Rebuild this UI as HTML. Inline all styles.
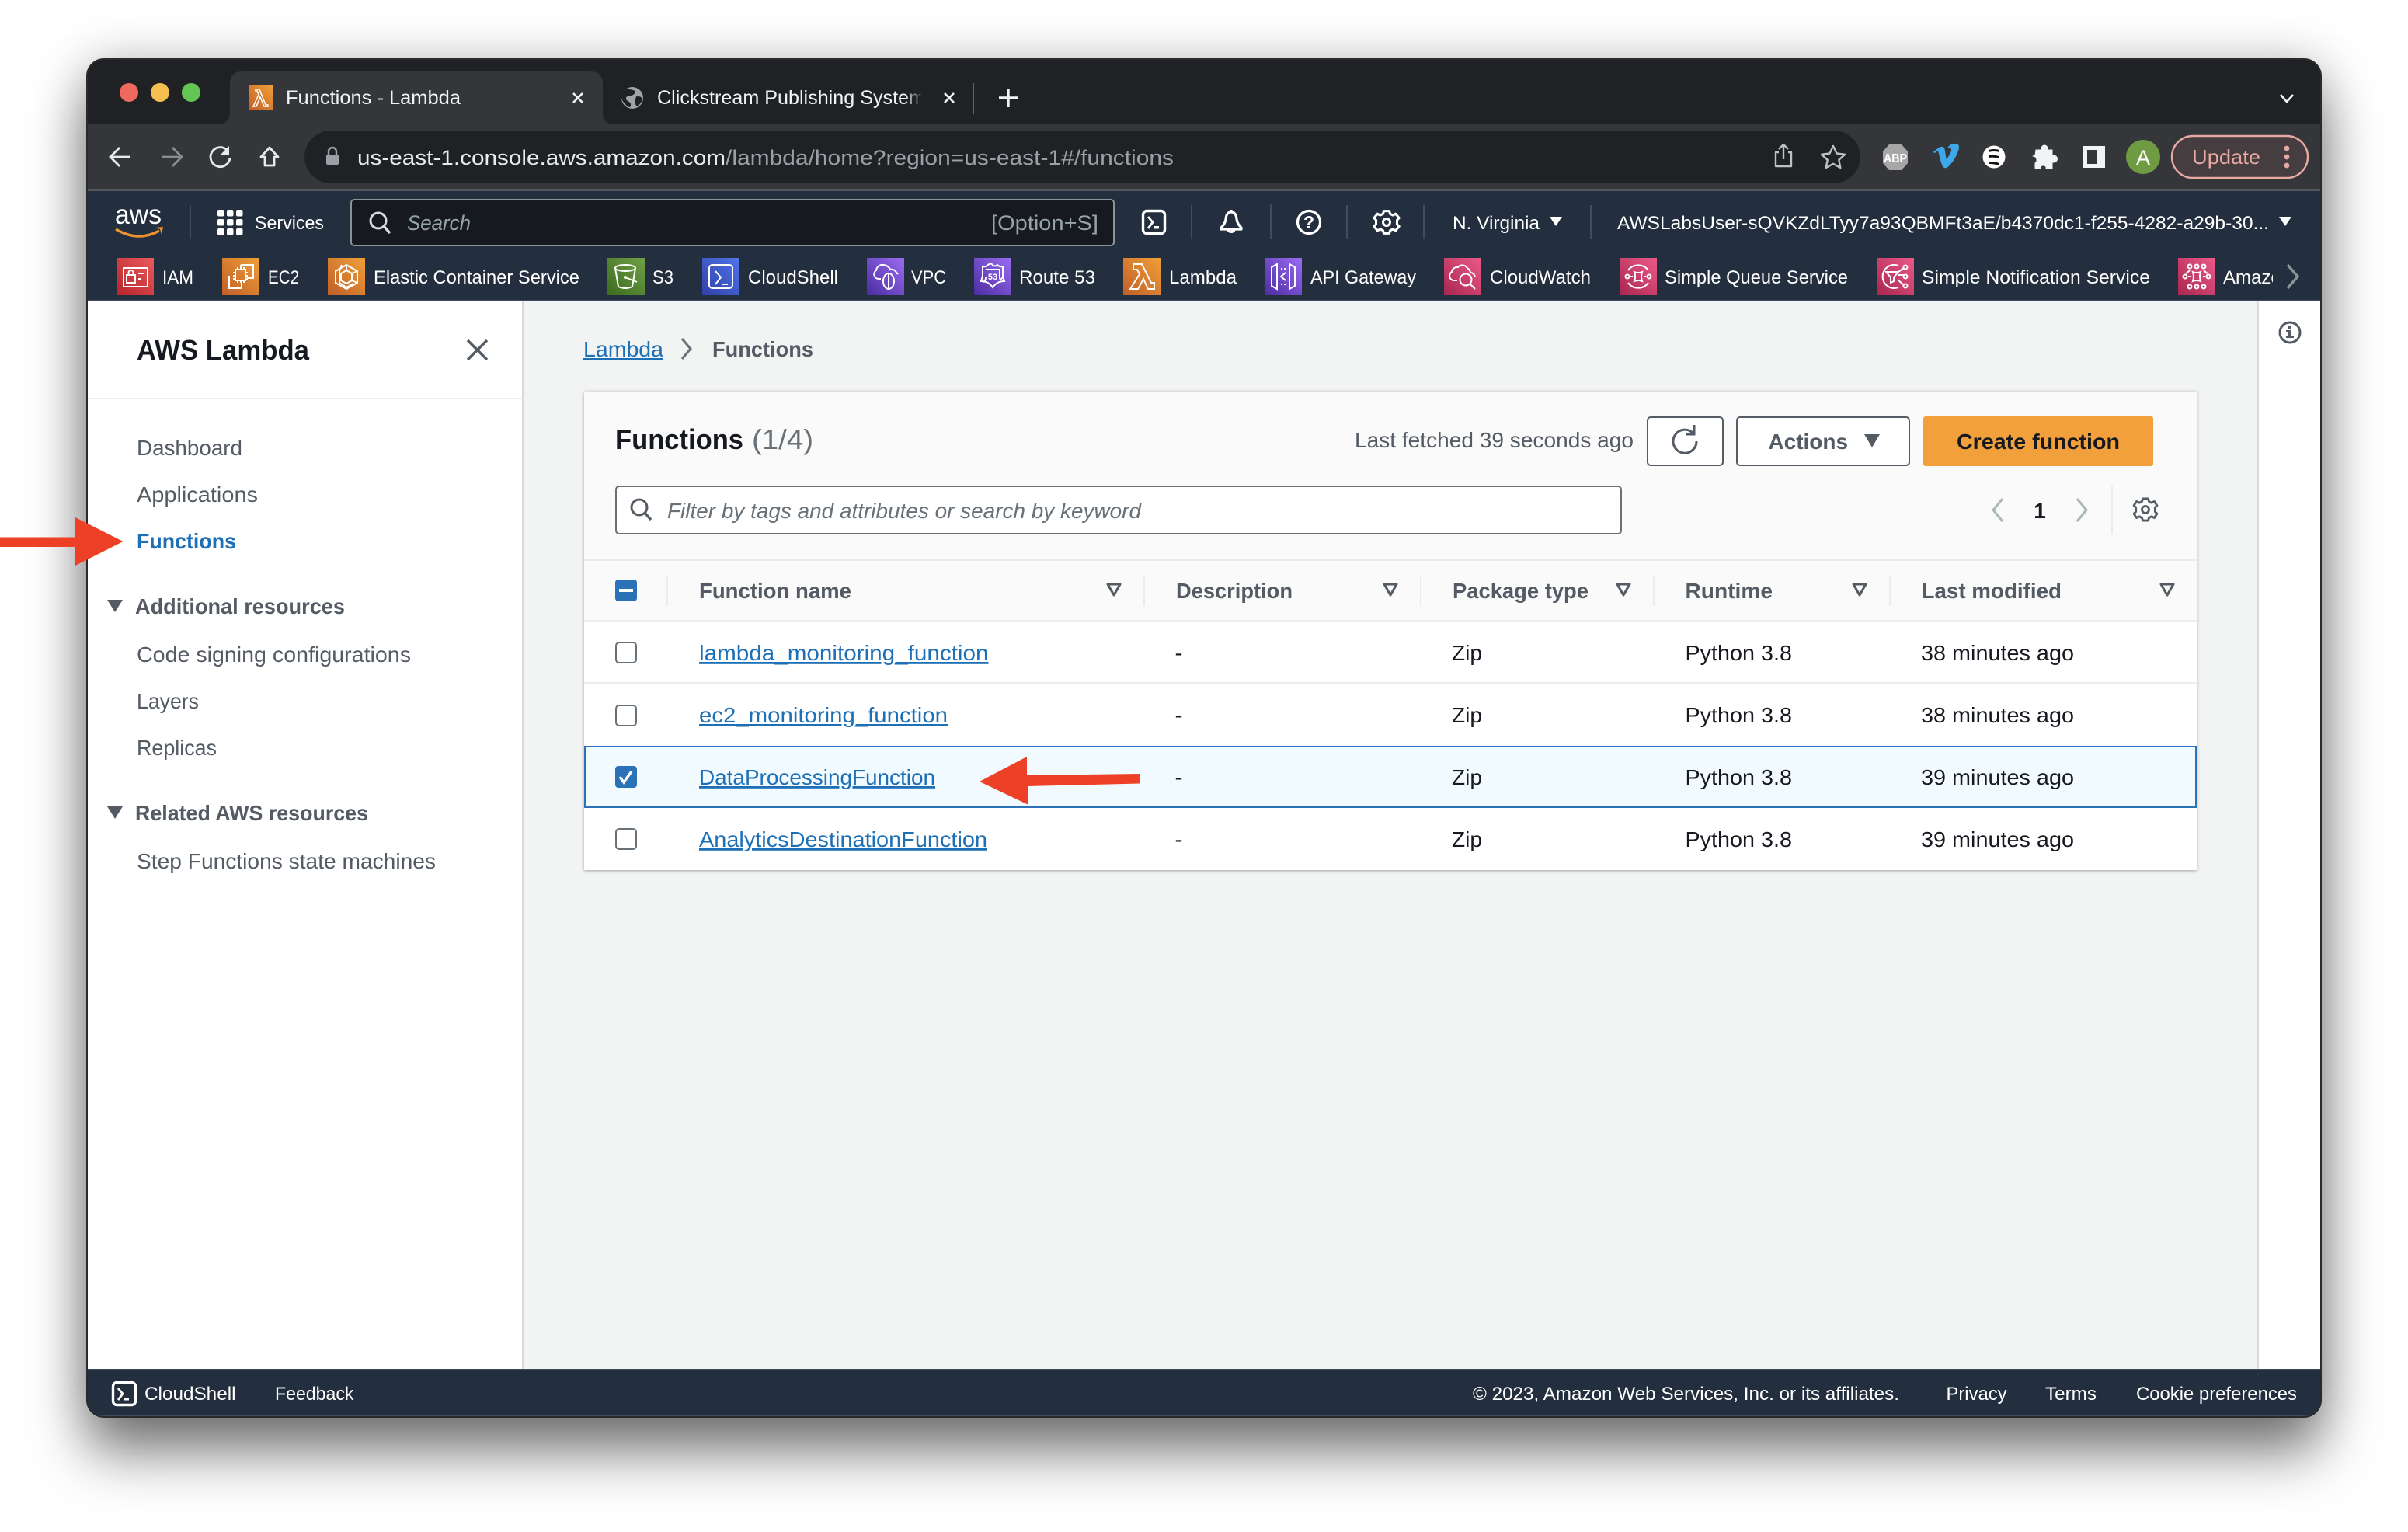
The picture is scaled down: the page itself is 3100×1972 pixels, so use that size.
<!DOCTYPE html>
<html lang="en">
<head>
<meta charset="utf-8">
<title>Functions - Lambda</title>
<style>
html,body{margin:0;padding:0;background:#fff;width:3100px;height:1972px;overflow:hidden}
#shadow{position:absolute;left:112px;top:76px;width:2876px;height:1748px;border-radius:22px;box-shadow:0 46px 72px rgba(0,0,0,.5),0 0 64px rgba(0,0,0,.22)}
svg{position:absolute;left:0;top:0}
text{font-family:"Liberation Sans",sans-serif;white-space:pre}
.t{font-size:28px;fill:#545b64}
.w{font-size:24px;fill:#fff}
.k{font-size:28px;fill:#16191f}
.l{font-size:28px;fill:#1d6fb6;text-decoration:underline}
.h{font-size:28px;fill:#545b64;font-weight:700}
.wi{fill:none;stroke:#fff;stroke-width:2;stroke-linejoin:miter}
.sort{fill:none;stroke:#545b64;stroke-width:3;stroke-linejoin:round}
.sep{stroke:#414d5c;stroke-width:2}
.hs{stroke:#eaeded;stroke-width:2}
.cb{fill:#fff;stroke:#687078;stroke-width:2}
</style>
</head>
<body>
<div id="shadow"></div>
<svg width="3100" height="1972" viewBox="0 0 3100 1972" xmlns="http://www.w3.org/2000/svg">
<defs>
<clipPath id="win"><rect x="112" y="76" width="2876" height="1748" rx="22"/></clipPath>
<clipPath id="amz"><rect x="2850" y="330" width="76" height="52"/></clipPath>
<linearGradient id="gr" x1="0" y1="1" x2="1" y2="0"><stop offset="0" stop-color="#b4242a"/><stop offset="1" stop-color="#ec5a5c"/></linearGradient>
<linearGradient id="go" x1="0" y1="1" x2="1" y2="0"><stop offset="0" stop-color="#bf5f28"/><stop offset="1" stop-color="#f09f39"/></linearGradient>
<linearGradient id="gg" x1="0" y1="1" x2="1" y2="0"><stop offset="0" stop-color="#3c6b20"/><stop offset="1" stop-color="#6fa045"/></linearGradient>
<linearGradient id="gb" x1="0" y1="1" x2="1" y2="0"><stop offset="0" stop-color="#3141a8"/><stop offset="1" stop-color="#4f74ea"/></linearGradient>
<linearGradient id="gp" x1="0" y1="1" x2="1" y2="0"><stop offset="0" stop-color="#4c2ca2"/><stop offset="1" stop-color="#9a6cf2"/></linearGradient>
<linearGradient id="gk" x1="0" y1="1" x2="1" y2="0"><stop offset="0" stop-color="#a8264f"/><stop offset="1" stop-color="#ec5a8a"/></linearGradient>
<linearGradient id="fade" x1="0" y1="0" x2="1" y2="0"><stop offset="0" stop-color="#202124" stop-opacity="0"/><stop offset="1" stop-color="#202124"/></linearGradient>
<filter id="cardsh" x="-2%" y="-2%" width="104%" height="104%"><feDropShadow dx="0" dy="1" stdDeviation="2" flood-color="#000" flood-opacity=".35"/></filter>
</defs>

<g clip-path="url(#win)">
<!-- tab strip -->
<rect x="112" y="76" width="2876" height="84" fill="#202124"/>
<circle cx="166" cy="119" r="12" fill="#ee6a5f"/><circle cx="206" cy="119" r="12" fill="#f5bf4f"/><circle cx="246" cy="119" r="12" fill="#62c554"/>
<path d="M280 160Q296 160 296 144V108Q296 92 312 92H760Q776 92 776 108V144Q776 160 792 160Z" fill="#35363a"/>
<rect x="320" y="110" width="32" height="32" fill="url(#go)"/>
<path d="M329 115h5l8 20h3v2h-5l-5-12-5 12h-4l7-15-2-5h-2z" fill="none" stroke="#fff" stroke-width="1.5"/>
<text x="368" y="134" font-size="25" fill="#f1f3f4" textLength="225" lengthAdjust="spacingAndGlyphs">Functions - Lambda</text>
<path d="M738 120l12 12M750 120l-12 12" stroke="#f1f3f4" stroke-width="2.6"/>
<circle cx="814" cy="126" r="14" fill="#a0a3a8"/>
<path d="M807 114c5 2 8 1 10 3s-1 5-4 6-6 0-7 3 3 4 5 6 1 6-1 6c-4-2-9-7-10-12s3-10 7-12zM820 124c3 0 7 1 7 3s-3 8-6 9-3-3-3-5 0-7 2-7z" fill="#202124"/>
<text x="846" y="134" font-size="25" fill="#f1f3f4" textLength="345" lengthAdjust="spacingAndGlyphs">Clickstream Publishing System</text>
<rect x="1164" y="104" width="24" height="44" fill="url(#fade)"/><rect x="1186" y="104" width="20" height="44" fill="#202124"/>
<path d="M1216 120l12 12M1228 120l-12 12" stroke="#f1f3f4" stroke-width="2.6"/>
<path d="M1253 107v40" stroke="#5f6368" stroke-width="2"/>
<path d="M1298 114v24M1286 126h24" stroke="#f1f3f4" stroke-width="3.4"/>
<path d="M2936 122l8 9 8-9" fill="none" stroke="#f1f3f4" stroke-width="2.6"/>

<!-- toolbar -->
<rect x="112" y="160" width="2876" height="84" fill="#35363a"/>
<rect x="112" y="243" width="2876" height="3" fill="#55565a"/>
<rect x="392" y="168" width="2003" height="68" rx="34" fill="#202124"/>
<path d="M168 202h-24M154 190l-12 12 12 12" fill="none" stroke="#e8eaed" stroke-width="2.8"/>
<path d="M209 202h24M222 190l12 12-12 12" fill="none" stroke="#8b8d91" stroke-width="2.8"/>
<path d="M293 194a12.5 12.5 0 1 0 3 9" fill="none" stroke="#e8eaed" stroke-width="2.8"/><path d="M295 188v11h-11z" fill="#e8eaed"/>
<path d="M347 190l-11 12h5v11h12v-11h5z" fill="none" stroke="#e8eaed" stroke-width="2.8" stroke-linejoin="round"/>
<rect x="420" y="199" width="16" height="13" rx="2" fill="#9aa0a6"/><path d="M423 200v-5a5 5 0 0 1 10 0v5" fill="none" stroke="#9aa0a6" stroke-width="2.4"/>
<text x="460" y="212" font-size="27" fill="#e8eaed" textLength="474" lengthAdjust="spacingAndGlyphs">us-east-1.console.aws.amazon.com</text>
<text x="934" y="212" font-size="27" fill="#9aa0a6" textLength="577" lengthAdjust="spacingAndGlyphs">/lambda/home?region=us-east-1#/functions</text>
<path d="M2290 196h-4v18h20v-18h-4M2296 205v-19M2290 192l6-6 6 6" fill="none" stroke="#bdc1c6" stroke-width="2.4" stroke-linejoin="round"/>
<path d="M2360 188l4.5 9.5 10.5 1.300-7.700 7 2 10.200-9.300-5.200-9.300 5.200 2-10.200-7.700-7 10.500-1.300z" fill="none" stroke="#bdc1c6" stroke-width="2.4" stroke-linejoin="round"/>
<path d="M2432 186h16l8 9v15l-8 9h-16l-8-9v-15z" fill="#a7a7a7"/>
<text x="2425" y="209" font-size="16" font-weight="700" fill="#fff" textLength="30" lengthAdjust="spacingAndGlyphs">ABP</text>
<path d="M2488 196c6-4 9-8 13-7 4 1 3 11 5 16 2-3 7-10 6-13-1-3-5-1-5-1 2-7 16-9 15-1-1 8-9 22-16 26-6 2-7-8-9-14-1-5-2-8-3-8l-3 3z" fill="#3ca8e9"/>
<circle cx="2567" cy="202" r="14.500" fill="#fff"/>
<path d="M2560 193q7-2 14 0v3q-7-2-14 0zM2561 200q6-1 12 1v3q-6-2-12-1zM2561 208q7 0 13 2v3q-6-2-13-2z" fill="#111"/>
<path d="M2621 193h7v-2a4 4 0 0 1 8 0v2h6v7h2a4.500 4.500 0 0 1 0 9h-2v8h-8v-2a4 4 0 0 0-7 0v2h-7v-7a5 5 0 0 0-3-9 5 5 0 0 0 3-1z" fill="#f1f3f4" stroke="#f1f3f4" stroke-linejoin="round"/>
<rect x="2682" y="188" width="28" height="28" fill="#f1f3f4"/><rect x="2687" y="193" width="13" height="18" fill="#35363a"/>
<circle cx="2759" cy="202" r="22" fill="#6f9b43"/>
<text x="2759" y="212" font-size="27" fill="#fff" text-anchor="middle">A</text>
<rect x="2796" y="175" width="175" height="54" rx="27" fill="#463d41" stroke="#e8a9a2" stroke-width="2.4"/>
<text x="2822" y="211" font-size="26" fill="#e8a9a2" textLength="88" lengthAdjust="spacingAndGlyphs">Update</text>
<circle cx="2944" cy="191" r="3.400" fill="#e8a9a2"/><circle cx="2944" cy="202" r="3.400" fill="#e8a9a2"/><circle cx="2944" cy="213" r="3.400" fill="#e8a9a2"/>

<!-- AWS header -->
<rect x="112" y="246" width="2876" height="142" fill="#232f3e"/>
<rect x="112" y="386" width="2876" height="2" fill="#414d5c"/>
<text x="148" y="288" font-size="35" fill="#fff" textLength="60" lengthAdjust="spacingAndGlyphs">aws</text>
<path d="M149 295q29 17 56 2" fill="none" stroke="#ec912d" stroke-width="3.400"/><path d="M199 293l11-1-2 10-2-7z" fill="#ec912d"/>
<path class="sep" d="M245 264v44M1534 264v44M1636 262v46M1734 264v44M1833 264v44M2048 264v44"/>
<g fill="#fff">
<rect x="280" y="270" width="8.500" height="8.500" rx="2"/><rect x="292" y="270" width="8.500" height="8.500" rx="2"/><rect x="304" y="270" width="8.500" height="8.500" rx="2"/>
<rect x="280" y="282" width="8.500" height="8.500" rx="2"/><rect x="292" y="282" width="8.500" height="8.500" rx="2"/><rect x="304" y="282" width="8.500" height="8.500" rx="2"/>
<rect x="280" y="294" width="8.500" height="8.500" rx="2"/><rect x="292" y="294" width="8.500" height="8.500" rx="2"/><rect x="304" y="294" width="8.500" height="8.500" rx="2"/>
</g>
<text x="328" y="295" class="w" textLength="89" lengthAdjust="spacingAndGlyphs">Services</text>
<rect x="452" y="257" width="982" height="59" rx="4" fill="#16191f" stroke="#879596" stroke-width="2"/>
<circle cx="487" cy="284" r="10" fill="none" stroke="#d5dbdb" stroke-width="3"/><path d="M494 291l8 9" stroke="#d5dbdb" stroke-width="3.400"/>
<text x="524" y="296" font-size="27" font-style="italic" fill="#95a5a6" textLength="82" lengthAdjust="spacingAndGlyphs">Search</text>
<text x="1276" y="296" font-size="27" fill="#95a5a6" textLength="138" lengthAdjust="spacingAndGlyphs">[Option+S]</text>
<rect x="1471.500" y="271.500" width="28" height="29" rx="5" fill="none" stroke="#fff" stroke-width="3.400"/>
<path d="M1478 279l6 7-6 8" fill="none" stroke="#fff" stroke-width="2.800"/><rect x="1486" y="291" width="6" height="3.500" fill="#fff"/>
<path d="M1585 273c-5 0-6.500 4-7 9-.5 5-3 8-6 11v2h26v-2c-3-3-5.500-6-6-11-.5-5-2-9-7-9zM1581 296a4.500 4.500 0 0 0 8 0M1585 270v3" fill="none" stroke="#fff" stroke-width="3.200" stroke-linejoin="round"/>
<circle cx="1685" cy="286" r="14.500" fill="none" stroke="#fff" stroke-width="3.200"/>
<text x="1685" y="294" font-size="23" font-weight="700" fill="#fff" text-anchor="middle">?</text>
<path transform="translate(1785 286) scale(.9) translate(-1785 -286)" d="M1781 270h8l1 4 4 2 4-2 5 6-3 3v6l3 3-5 6-4-2-4 2-1 4h-8l-1-4-4-2-4 2-5-6 3-3v-6l-3-3 5-6 4 2 4-2z" fill="none" stroke="#fff" stroke-width="3.400" stroke-linejoin="round"/>
<circle cx="1785" cy="286" r="4.500" fill="none" stroke="#fff" stroke-width="3"/>
<text x="1870" y="295" class="w" textLength="112" lengthAdjust="spacingAndGlyphs">N. Virginia</text>
<path d="M1995 279h16l-8 12z" fill="#fff"/>
<text x="2082" y="295" class="w" textLength="839" lengthAdjust="spacingAndGlyphs">AWSLabsUser-sQVKZdLTyy7a93QBMFt3aE/b4370dc1-f255-4282-a29b-30...</text>
<path d="M2934 279h16l-8 12z" fill="#fff"/>

<!-- favourites bar -->
<g transform="translate(150 332)"><rect width="48" height="48" fill="url(#gr)"/><g class="wi"><rect x="9" y="13" width="31" height="24"/><rect x="13" y="22" width="11" height="10"/><path d="M15.500 22v-3a3 3 0 0 1 6 0v3M28 20h7M28 27h4"/></g></g>
<text x="209" y="365" class="w" textLength="40" lengthAdjust="spacingAndGlyphs">IAM</text>
<g transform="translate(286 332)"><rect width="48" height="48" fill="url(#go)"/><g class="wi"><path d="M9 23H9v16h16v-7"/><path d="M24 9h16v17h-8"/><path d="M24 9v4"/><rect x="17" y="15" width="13" height="14"/><path d="M20 12v3M24 12v3M28 12v3M20 29v3M24 29v3M28 29v3M14 19h3M14 23h3M14 27h3M30 19h3M30 23h3M30 27h3"/></g></g>
<text x="345" y="365" class="w" textLength="40" lengthAdjust="spacingAndGlyphs">EC2</text>
<g transform="translate(422 332)"><rect width="48" height="48" fill="url(#go)"/><g class="wi"><path d="M24 9l14 8v15l-14 8-14-8v-15zM18 9l-3 8v15l9 6 9-5M24 16l7 4v9l-7 4-7-4v-9zM24 9v7M31 20l7-3M31 29l7 3"/></g></g>
<text x="481" y="365" class="w" textLength="265" lengthAdjust="spacingAndGlyphs">Elastic Container Service</text>
<g transform="translate(782 332)"><rect width="48" height="48" fill="url(#gg)"/><g class="wi"><ellipse cx="23" cy="13" rx="13" ry="4"/><path d="M10 13l4 24q9 4 18 0l4-24"/><path d="M23 25l15 6"/></g><circle cx="23" cy="25" r="2" fill="#fff"/></g>
<text x="840" y="365" class="w" textLength="27" lengthAdjust="spacingAndGlyphs">S3</text>
<g transform="translate(904 332)"><rect width="48" height="48" fill="url(#gb)"/><rect x="9" y="9" width="30" height="30" rx="4" class="wi"/><path d="M17 17l7 8-7 9M25 34h8" class="wi"/></g>
<text x="963" y="365" class="w" textLength="116" lengthAdjust="spacingAndGlyphs">CloudShell</text>
<g transform="translate(1116 332)"><rect width="48" height="48" fill="url(#gp)"/><g class="wi"><path d="M18 27h-3a6 6 0 0 1-3-11 8 8 0 0 1 9-7c4 0 8 3 9 6 3-1 7 1 8 4l2 2"/><ellipse cx="28" cy="30" rx="7" ry="10"/><path d="M28 20v20"/></g></g>
<text x="1173" y="365" class="w" textLength="45" lengthAdjust="spacingAndGlyphs">VPC</text>
<g transform="translate(1254 332)"><rect width="48" height="48" fill="url(#gp)"/><g class="wi"><path d="M11 11q4 1 7-2 3-3 6 0 3 3 6 0 3 3 7 2v12q1 4 2 7c-5 0-11 2-15 8-4-6-10-8-15-8q1-3 2-7z"/><path d="M15 15h18v10q0 5 4 0M15 25q0 5-3 6"/></g><text x="24" y="28" font-size="11" font-weight="700" fill="#fff" text-anchor="middle">53</text></g>
<text x="1312" y="365" class="w" textLength="98" lengthAdjust="spacingAndGlyphs">Route 53</text>
<g transform="translate(1446 332)"><rect width="48" height="48" fill="url(#go)"/><path class="wi" d="M13 8v7h5l3 6-12 19h10l7-13 6 13h8v-8h-4l-12-24z"/></g>
<text x="1505" y="365" class="w" textLength="87" lengthAdjust="spacingAndGlyphs">Lambda</text>
<g transform="translate(1628 332)"><rect width="48" height="48" fill="url(#gp)"/><g class="wi"><path d="M16 8l-7 4v24l7 4zM32 8l7 4v24l-7 4zM21 14h2M25 14h2M21 34h2M25 34h2"/><path d="M27 19l-6 5 6 5"/></g></g>
<text x="1687" y="365" class="w" textLength="136" lengthAdjust="spacingAndGlyphs">API Gateway</text>
<g transform="translate(1859 332)"><rect width="48" height="48" fill="url(#gk)"/><g class="wi"><path d="M17 29h-5a6 6 0 0 1-2-11 7 7 0 0 1 8-6c2-3 9-4 12 1 3 2 4 5 4 6 3 0 5 2 6 5"/><circle cx="28" cy="28" r="7.500"/><path d="M33 33l7 7"/></g></g>
<text x="1918" y="365" class="w" textLength="130" lengthAdjust="spacingAndGlyphs">CloudWatch</text>
<g transform="translate(2085 332)"><rect width="48" height="48" fill="url(#gk)"/><g class="wi"><path d="M11 16a16 16 0 0 1 26 0M11 32a16 16 0 0 0 26 0M19 18q5 2 10 0q-2 6 0 12q-5-2-10 0q2-6 0-12z"/><circle cx="10" cy="24" r="2.500"/><circle cx="38" cy="24" r="2.500"/><path d="M14 24h3M31 24h3"/></g></g>
<text x="2143" y="365" class="w" textLength="236" lengthAdjust="spacingAndGlyphs">Simple Queue Service</text>
<g transform="translate(2416 332)"><rect width="48" height="48" fill="url(#gk)"/><g class="wi"><path d="M28 10a15 15 0 1 0 0 28"/><path d="M12 18h16l-6 7v5l-4 2v-7z"/><circle cx="37" cy="12" r="2.500"/><circle cx="37" cy="24" r="2.500"/><circle cx="37" cy="36" r="2.500"/><path d="M28 18l7-5M28 22h7M27 28l8 7"/></g></g>
<text x="2474" y="365" class="w" textLength="294" lengthAdjust="spacingAndGlyphs">Simple Notification Service</text>
<g transform="translate(2804 332)"><rect width="48" height="48" fill="url(#gk)"/><g class="wi"><circle cx="15" cy="11" r="2.500"/><circle cx="24" cy="11" r="2.500"/><circle cx="33" cy="11" r="2.500"/><circle cx="15" cy="37" r="2.500"/><circle cx="24" cy="37" r="2.500"/><circle cx="33" cy="37" r="2.500"/><circle cx="9" cy="24" r="2.500"/><circle cx="39" cy="24" r="2.500"/><path d="M19 18q5 2 10 0q-2 6 0 12q-5-2-10 0q2-6 0-12zM13 24h3M32 24h3M15 16q-3 3-5 4M33 16q3 3 5 4"/></g></g>
<g clip-path="url(#amz)"><text x="2862" y="365" class="w">Amazon</text></g>
<path d="M2945 341l13 15-13 15" fill="none" stroke="#879596" stroke-width="3.400"/>

<!-- page -->
<rect x="112" y="388" width="2876" height="1374" fill="#f2f3f3"/>
<rect x="112" y="388" width="561" height="1374" fill="#fff"/>
<rect x="672" y="388" width="2" height="1374" fill="#d5dbdb"/>
<rect x="2907" y="388" width="81" height="1374" fill="#fff"/>
<rect x="2906" y="388" width="2" height="1374" fill="#d5dbdb"/>
<circle cx="2948" cy="428" r="13" fill="none" stroke="#545b64" stroke-width="3"/><rect x="2946" y="425" width="4" height="9" fill="#545b64"/><rect x="2946" y="420" width="4" height="3.500" fill="#545b64"/><rect x="2943" y="425" width="4" height="2" fill="#545b64"/><rect x="2943" y="433" width="10" height="2" fill="#545b64"/>

<!-- sidebar -->
<text x="176" y="463" font-size="36" font-weight="700" fill="#16191f" textLength="222" lengthAdjust="spacingAndGlyphs">AWS Lambda</text>
<path d="M602 438l25 25M627 438l-25 25" stroke="#545b64" stroke-width="3.400"/>
<rect x="112" y="512" width="561" height="2" fill="#eaeded"/>
<text x="176" y="586" class="t" textLength="136" lengthAdjust="spacingAndGlyphs">Dashboard</text>
<text x="176" y="646" class="t" textLength="156" lengthAdjust="spacingAndGlyphs">Applications</text>
<text x="176" y="706" font-size="28" font-weight="700" fill="#1d6fb6" textLength="128" lengthAdjust="spacingAndGlyphs">Functions</text>
<path d="M138 772h20l-10 16z" fill="#545b64"/>
<text x="174" y="790" class="h" textLength="270" lengthAdjust="spacingAndGlyphs">Additional resources</text>
<text x="176" y="852" class="t" textLength="353" lengthAdjust="spacingAndGlyphs">Code signing configurations</text>
<text x="176" y="912" class="t" textLength="80" lengthAdjust="spacingAndGlyphs">Layers</text>
<text x="176" y="972" class="t" textLength="103" lengthAdjust="spacingAndGlyphs">Replicas</text>
<path d="M138 1038h20l-10 16z" fill="#545b64"/>
<text x="174" y="1056" class="h" textLength="300" lengthAdjust="spacingAndGlyphs">Related AWS resources</text>
<text x="176" y="1118" class="t" textLength="385" lengthAdjust="spacingAndGlyphs">Step Functions state machines</text>

<!-- breadcrumb -->
<text x="751" y="459" class="l" textLength="103" lengthAdjust="spacingAndGlyphs">Lambda</text>
<path d="M878 436l11 13-11 13" fill="none" stroke="#687078" stroke-width="3"/>
<text x="917" y="459" font-size="28" font-weight="700" fill="#545b64" textLength="130" lengthAdjust="spacingAndGlyphs">Functions</text>

<!-- card -->
<rect x="752" y="504" width="2076" height="616" fill="#fafafa" filter="url(#cardsh)"/>
<text x="792" y="578" font-size="36" font-weight="700" fill="#16191f" textLength="165" lengthAdjust="spacingAndGlyphs">Functions</text>
<text x="968" y="578" font-size="36" fill="#687078" textLength="79" lengthAdjust="spacingAndGlyphs">(1/4)</text>
<text x="1744" y="576" class="t" textLength="359" lengthAdjust="spacingAndGlyphs">Last fetched 39 seconds ago</text>
<rect x="2121" y="537" width="97" height="62" rx="4" fill="#fff" stroke="#545b64" stroke-width="2"/>
<path d="M2180 558a15 15 0 1 0 4 10" fill="none" stroke="#545b64" stroke-width="3"/><path d="M2181 547v12h-11" fill="none" stroke="#545b64" stroke-width="3"/>
<rect x="2236" y="537" width="222" height="62" rx="4" fill="#fff" stroke="#545b64" stroke-width="2"/>
<text x="2276.500" y="578" class="h" textLength="102.500" lengthAdjust="spacingAndGlyphs">Actions</text>
<path d="M2400 559h20l-10 17z" fill="#545b64"/>
<rect x="2476" y="536" width="296" height="64" rx="3" fill="#f2a03c"/>
<text x="2519" y="578" font-size="28" font-weight="700" fill="#16191f" textLength="210" lengthAdjust="spacingAndGlyphs">Create function</text>
<rect x="793" y="626" width="1294" height="61" rx="4" fill="#fff" stroke="#687078" stroke-width="2"/>
<circle cx="823" cy="653" r="10" fill="none" stroke="#545b64" stroke-width="3"/><path d="M830 660l8 9" stroke="#545b64" stroke-width="3.400"/>
<text x="859" y="667" font-size="28" font-style="italic" fill="#687078" textLength="610" lengthAdjust="spacingAndGlyphs">Filter by tags and attributes or search by keyword</text>
<path d="M2578 642l-12 14.500 12 14.500" fill="none" stroke="#aab7b8" stroke-width="3"/>
<text x="2626" y="667" font-size="28" font-weight="700" fill="#16191f" text-anchor="middle">1</text>
<path d="M2674 642l12 14.500-12 14.500" fill="none" stroke="#aab7b8" stroke-width="3"/>
<rect x="2718" y="625" width="2" height="62" fill="#eaeded"/>
<path transform="translate(2762 656) scale(.88) translate(-2762 -656)" d="M2758 640h8l1 4 4 2 4-2 4 6-3 3v6l3 3-4 6-4-2-4 2-1 4h-8l-1-4-4-2-4 2-4-6 3-3v-6l-3-3 4-6 4 2 4-2z" fill="none" stroke="#545b64" stroke-width="3.200" stroke-linejoin="round"/>
<circle cx="2762" cy="656" r="4.500" fill="none" stroke="#545b64" stroke-width="2.800"/>

<!-- table -->
<rect x="752" y="720" width="2076" height="2" fill="#eaeded"/>
<rect x="752" y="800" width="2076" height="320" fill="#fff"/>
<rect x="752" y="798" width="2076" height="2" fill="#eaeded"/>
<rect x="752" y="878" width="2076" height="2" fill="#eaeded"/>
<rect x="753" y="961" width="2074" height="78" fill="#f1faff" stroke="#2c72b8" stroke-width="2"/>
<path class="hs" d="M859 740v40M1473 740v40M1829 740v40M2129 740v40M2433 740v40"/>
<rect x="792" y="746" width="28" height="28" rx="4" fill="#2c72b8"/><rect x="797" y="758" width="18" height="4" fill="#fff"/>
<text x="900" y="770" class="h" textLength="196" lengthAdjust="spacingAndGlyphs">Function name</text>
<path class="sort" d="M1426 752h16l-8 14z"/>
<text x="1514" y="770" class="h" textLength="150" lengthAdjust="spacingAndGlyphs">Description</text>
<path class="sort" d="M1782 752h16l-8 14z"/>
<text x="1870" y="770" class="h" textLength="175" lengthAdjust="spacingAndGlyphs">Package type</text>
<path class="sort" d="M2082 752h16l-8 14z"/>
<text x="2169.500" y="770" class="h" textLength="112.500" lengthAdjust="spacingAndGlyphs">Runtime</text>
<path class="sort" d="M2386 752h16l-8 14z"/>
<text x="2473.500" y="770" class="h" textLength="180.500" lengthAdjust="spacingAndGlyphs">Last modified</text>
<path class="sort" d="M2782 752h16l-8 14z"/>

<rect x="793" y="827" width="26" height="26" rx="4" class="cb"/>
<text x="900" y="850" class="l" textLength="372.500" lengthAdjust="spacingAndGlyphs">lambda_monitoring_function</text>
<text x="1512.500" y="850" class="k" textLength="10" lengthAdjust="spacingAndGlyphs">-</text>
<text x="1869" y="850" class="k" textLength="39" lengthAdjust="spacingAndGlyphs">Zip</text>
<text x="2169.500" y="850" class="k" textLength="137.500" lengthAdjust="spacingAndGlyphs">Python 3.8</text>
<text x="2473" y="850" class="k" textLength="197" lengthAdjust="spacingAndGlyphs">38 minutes ago</text>

<rect x="793" y="908" width="26" height="26" rx="4" class="cb"/>
<text x="900" y="930" class="l" textLength="320" lengthAdjust="spacingAndGlyphs">ec2_monitoring_function</text>
<text x="1512.500" y="930" class="k" textLength="10" lengthAdjust="spacingAndGlyphs">-</text>
<text x="1869" y="930" class="k" textLength="39" lengthAdjust="spacingAndGlyphs">Zip</text>
<text x="2169.500" y="930" class="k" textLength="137.500" lengthAdjust="spacingAndGlyphs">Python 3.8</text>
<text x="2473" y="930" class="k" textLength="197" lengthAdjust="spacingAndGlyphs">38 minutes ago</text>

<rect x="792" y="986" width="28" height="28" rx="4" fill="#2c72b8"/><path d="M798 1000l5 7 10-14" fill="none" stroke="#fff" stroke-width="3.400"/>
<text x="900" y="1010" class="l" textLength="304" lengthAdjust="spacingAndGlyphs">DataProcessingFunction</text>
<text x="1512.500" y="1010" class="k" textLength="10" lengthAdjust="spacingAndGlyphs">-</text>
<text x="1869" y="1010" class="k" textLength="39" lengthAdjust="spacingAndGlyphs">Zip</text>
<text x="2169.500" y="1010" class="k" textLength="137.500" lengthAdjust="spacingAndGlyphs">Python 3.8</text>
<text x="2473" y="1010" class="k" textLength="197" lengthAdjust="spacingAndGlyphs">39 minutes ago</text>

<rect x="793" y="1067" width="26" height="26" rx="4" class="cb"/>
<text x="900" y="1090" class="l" textLength="371" lengthAdjust="spacingAndGlyphs">AnalyticsDestinationFunction</text>
<text x="1512.500" y="1090" class="k" textLength="10" lengthAdjust="spacingAndGlyphs">-</text>
<text x="1869" y="1090" class="k" textLength="39" lengthAdjust="spacingAndGlyphs">Zip</text>
<text x="2169.500" y="1090" class="k" textLength="137.500" lengthAdjust="spacingAndGlyphs">Python 3.8</text>
<text x="2473" y="1090" class="k" textLength="197" lengthAdjust="spacingAndGlyphs">39 minutes ago</text>

<!-- footer -->
<rect x="112" y="1762" width="2876" height="62" fill="#232f3e"/>
<rect x="112" y="1762" width="2876" height="2" fill="#414d5c"/>
<rect x="112" y="1821" width="2876" height="2" fill="#414d5c"/>
<rect x="145.500" y="1779.500" width="29" height="29" rx="5" fill="none" stroke="#fff" stroke-width="3.400"/>
<path d="M152 1787l6 7-6 8" fill="none" stroke="#fff" stroke-width="2.800"/><rect x="160" y="1799" width="6" height="3.500" fill="#fff"/>
<text x="186" y="1802" class="w" textLength="117.500" lengthAdjust="spacingAndGlyphs">CloudShell</text>
<text x="354" y="1802" class="w" textLength="101.500" lengthAdjust="spacingAndGlyphs">Feedback</text>
<text x="1896" y="1802" class="w" textLength="549" lengthAdjust="spacingAndGlyphs">© 2023, Amazon Web Services, Inc. or its affiliates.</text>
<text x="2505.500" y="1802" class="w" textLength="78" lengthAdjust="spacingAndGlyphs">Privacy</text>
<text x="2633" y="1802" class="w" textLength="66" lengthAdjust="spacingAndGlyphs">Terms</text>
<text x="2750" y="1802" class="w" textLength="207" lengthAdjust="spacingAndGlyphs">Cookie preferences</text>
</g>
<rect x="112" y="76" width="2876" height="1748" rx="22" fill="none" stroke="#2a2a2a" stroke-width="2"/>

<!-- annotation arrows -->
<path d="M0 691.500H97V666L158.500 697 97 728V704H0Z" fill="#ee4026"/>
<path d="M1467 996V1008.500L1323 1012 1324 1036 1261 1006 1322 974V998Z" fill="#ee4026"/>
</svg>
</body>
</html>
